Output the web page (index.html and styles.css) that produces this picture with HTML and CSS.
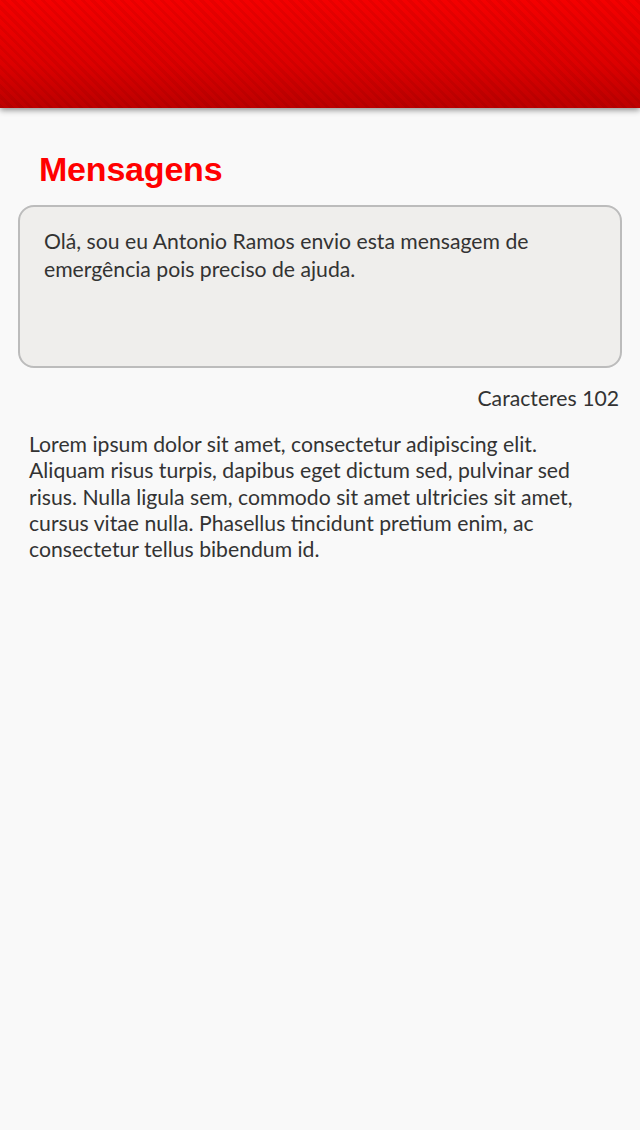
FILE: index.html
```html
<!DOCTYPE html>
<html lang="pt">
<head>
<meta charset="utf-8">
<title>Mensagens</title>
<link rel="stylesheet" href="styles.css">
</head>
<body>
<header class="topbar"></header>
<main class="content">
  <h1 class="title">Mensagens</h1>
  <div class="message-box">Olá, sou eu Antonio Ramos envio esta mensagem de emergência pois preciso de ajuda.</div>
  <div class="counter">Caracteres 102</div>
  <p class="body-text">Lorem ipsum dolor sit amet, consectetur adipiscing elit. Aliquam risus turpis, dapibus eget dictum sed, pulvinar sed risus. Nulla ligula sem, commodo sit amet ultricies sit amet, cursus vitae nulla. Phasellus tincidunt pretium enim, ac consectetur tellus bibendum id.</p>
</main>
</body>
</html>
```

FILE: styles.css
```css
html, body {
  margin: 0;
  padding: 0;
}
body {
  width: 640px;
  height: 1130px;
  background: #f9f9f9;
  font-family: Lato, "Open Sans", sans-serif;
  color: #333333;
  overflow: hidden;
}
.topbar {
  height: 108px;
  background:
    repeating-linear-gradient(45deg, rgba(0,0,0,0.05) 0 3px, rgba(255,255,255,0) 3px 7px),
    linear-gradient(#f40000, #dc0000 60%, #bc0000);
  box-shadow: 0 2px 6px rgba(0,0,0,0.45);
}
.content {
  padding: 0 18px;
  display: flex;
  flex-direction: column;
}
.title {
  margin: 42px 0 0 21px;
  font-family: "Liberation Sans", Arial, sans-serif;
  font-weight: bold;
  font-size: 34px;
  line-height: 38px;
  color: #ff0000;
  letter-spacing: -0.2px;
}
.message-box {
  margin-top: 17px;
  height: 139px;
  border: 2px solid #bcbcbc;
  border-radius: 16px;
  background: #efeeec;
  padding: 20px 24px 0 24px;
  font-size: 21.2px;
  line-height: 28px;
  color: #333333;
}
.counter {
  margin-top: 16px;
  text-align: right;
  font-size: 21.2px;
  line-height: 28px;
  padding-right: 3px;
}
.body-text {
  margin: 19px 0 0 11px;
  font-size: 21.2px;
  line-height: 26.3px;
  width: 580px;
}
```
